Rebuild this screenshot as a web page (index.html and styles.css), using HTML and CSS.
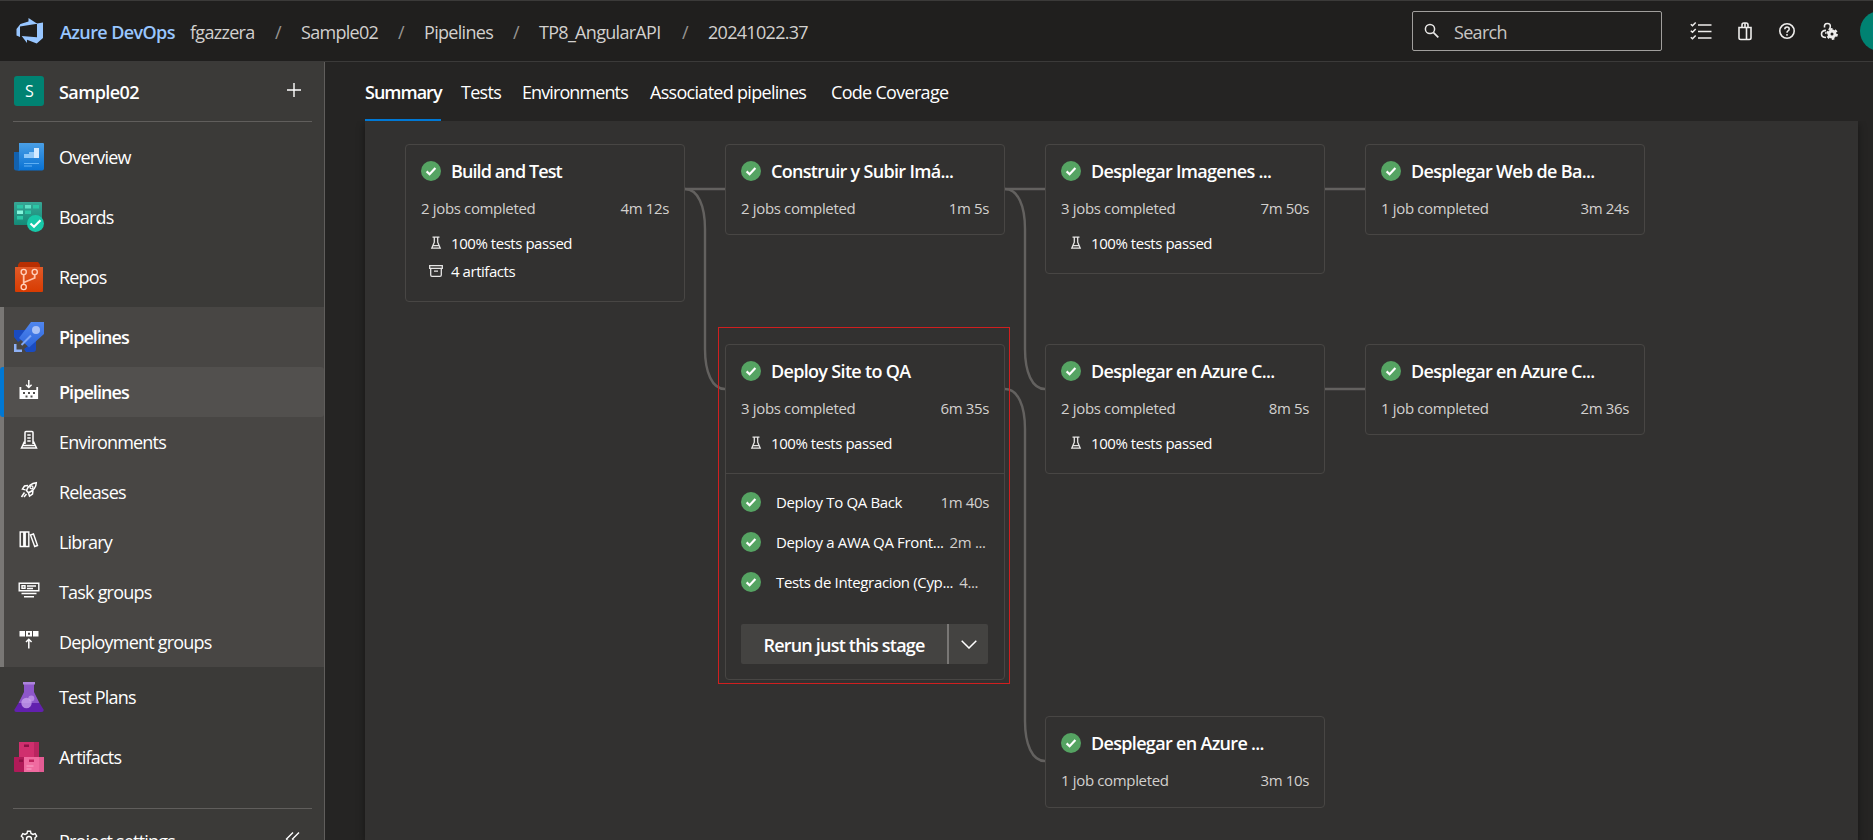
FILE: index.html
```
<!DOCTYPE html>
<html lang="en">
<head>
<meta charset="utf-8">
<title>Pipelines - Run 20241022.37</title>
<link rel="stylesheet" href="styles.css">
</head>
<body>
<svg class="defs" width="0" height="0" aria-hidden="true">
  <symbol id="ok" viewBox="0 0 20 20"><circle cx="10" cy="10" r="10" fill="#55a362"/><path d="M5.6 10.4l3 2.9 5.8-6.2" fill="none" stroke="#fff" stroke-width="2.2"/></symbol>
  <symbol id="flask" viewBox="0 0 12 14"><path d="M2.5 1.200h7M4.300 1.200v5L1.800 12.200h8.400L7.700 6.200v-5M3 9.700h6" fill="none" stroke="#e6e5e4" stroke-width="1.300"/></symbol>
  <symbol id="box" viewBox="0 0 14 14"><path d="M.7 1.700h12.600v2.600H.7zM1.700 4.300v6.700q0 1.300 1.300 1.300h8q1.300 0 1.300-1.300V4.300M5 7.200h4" fill="none" stroke="#e6e5e4" stroke-width="1.300"/></symbol>
</svg>
<header class="topbar">
  <svg class="logo" width="28" height="26" viewBox="0 0 28 26"><path fill="#98c6ff" d="M27 4.500V20l-6.300 5.500-9.700-3.700V25l-5.300-7L21 19.200V5.500zM21.200 5.700L12.500 0v3.500L4.400 6 .5 11v6.500l3.500 1.600V8.500z"/></svg>
  <span class="brand">Azure DevOps</span>
  <nav class="crumbs"><span class="c1">fgazzera</span><i>/</i><span class="c2">Sample02</span><i>/</i><span class="c3">Pipelines</span><i>/</i><span class="c4">TP8_AngularAPI</span><i>/</i><span class="c5">20241022.37</span></nav>
  <div class="search"><svg width="16" height="16" viewBox="0 0 16 16"><circle cx="6" cy="6" r="4.600" fill="none" stroke="#e8e7e6" stroke-width="1.500"/><path d="M9.300 9.300l5 5" stroke="#e8e7e6" stroke-width="1.700"/></svg><span>Search</span></div>
  <div class="tools">
    <svg class="t1" width="22" height="20" viewBox="0 0 22 20"><path d="M8 4h13.500M8 10.500h13.500M8 17h13.500M.8 3.200l1.700 1.600 3.200-3.400M.8 9.700l1.700 1.600 3.200-3.400M.8 16.200l1.700 1.600 3.200-3.400" fill="none" stroke="#eeedec" stroke-width="1.500"/></svg>
    <svg class="t2" width="16" height="20" viewBox="0 0 16 20"><path d="M2 6.500h12v10.300q0 1.700-1.700 1.700H3.700Q2 18.500 2 16.800zM5 6.500V4q0-2 1.800-2h2.400Q11 2 11 4v2.500M8 2v4M9.500 6.500v12" fill="none" stroke="#eeedec" stroke-width="1.600"/></svg>
    <svg class="t3" width="18" height="18" viewBox="0 0 18 18"><circle cx="9" cy="9" r="7.200" fill="none" stroke="#eeedec" stroke-width="1.600"/><path d="M6.800 7.200q0-2.300 2.200-2.300t2.200 2q0 1.200-1.200 1.900Q9 9.400 9 10.700M9 12v1.800" fill="none" stroke="#eeedec" stroke-width="1.500"/></svg>
    <svg class="t4" width="18" height="18" viewBox="0 0 18 18"><path d="M4.500 5.500Q4 1.500 7.300 1.500t3 3.300Q10.300 6.500 8.700 8M6 8.400Q1.500 8.500 1.500 12q0 3.500 4.500 3.500M6 11h-1" fill="none" stroke="#eeedec" stroke-width="1.600"/><circle cx="12" cy="12" r="3" fill="none" stroke="#eeedec" stroke-width="3"/><circle cx="12" cy="12" r="4.900" fill="none" stroke="#eeedec" stroke-width="2" stroke-dasharray="2.560 2.560"/></svg>
    <span class="avatar">F</span>
  </div>
</header>
<div class="body">
  <aside class="side">
    <div class="project"><span class="tile">S</span><b>Sample02</b><svg width="14" height="14" viewBox="0 0 14 14"><path d="M7 0v14M0 7h14" stroke="#fff" stroke-width="1.400"/></svg></div>
    <hr>
    <div class="row first"><span class="ic"><svg width="30" height="30" viewBox="0 0 30 30"><defs><linearGradient id="g1" x2="0" y2="1"><stop stop-color="#4a9fe6"/><stop offset="1" stop-color="#0871d3"/></linearGradient></defs><path d="M0 10h6v18.500H2q-2 0-2-2z" fill="#1261ae"/><path d="M5 1h24q1 0 1 1v24.500q0 2-2 2H3q2 0 2-2z" fill="url(#g1)"/><path d="M10 12h5v-2h5V6h5v10H10z" fill="#8fc8f8"/><path d="M20 6h5v10h-5z" fill="#d4eaff"/><path d="M10 21.500h15M10 24h8" stroke="#5fb0f4" stroke-width="1"/></svg></span>Overview</div>
    <div class="row"><span class="ic"><svg width="30" height="30" viewBox="0 0 30 30"><defs><linearGradient id="g2" x2="0" y2="1"><stop stop-color="#37a695"/><stop offset="1" stop-color="#148a77"/></linearGradient></defs><path d="M1 0h26q1 0 1 1v22H1q-1 0-1-1V1q0-1 1-1z" fill="url(#g2)"/><path d="M3 3h6v3.500H3zM19 3h6v3.500h-6zM11 8.500h6V12h-6zM3 14h6v3.500H3z" fill="#2bc6a5"/><path d="M11 3h6v3.500h-6z" fill="#5fe0c5"/><path d="M3 8.500h6V12H3z" fill="#86f5dd"/><circle cx="21.500" cy="21.500" r="8.500" fill="#17c8a8"/><path d="M16.500 21.500l3.500 3.300 6.500-6.600" fill="none" stroke="#fff" stroke-width="2.200"/></svg></span>Boards</div>
    <div class="row"><span class="ic"><svg width="30" height="30" viewBox="0 0 30 30"><defs><linearGradient id="g3" x2="0" y2="1"><stop stop-color="#e05a28"/><stop offset="1" stop-color="#d83b01"/></linearGradient></defs><path d="M6 0h18l2 2.500v3H4v-3z" fill="#b82f02"/><path d="M1 5h28v24q0 1-1 1H2q-1 0-1-1z" fill="url(#g3)"/><g fill="none" stroke="#ffd3c0" stroke-width="1.300"><circle cx="9.700" cy="10" r="2.600"/><circle cx="20.700" cy="10" r="2.600"/><circle cx="9.700" cy="25" r="2.600"/></g><path d="M9.700 12.600V22M20.700 12.600v3.400L9.700 20.500" fill="none" stroke="#ffc2a8" stroke-width="1.800"/></svg></span>Repos</div>
    <div class="group">
      <div class="row strong"><span class="ic"><svg width="30" height="30" viewBox="0 0 30 30"><defs><linearGradient id="g4" x2="0" y2="1"><stop stop-color="#5086ee"/><stop offset="1" stop-color="#2d66dc"/></linearGradient></defs><path d="M0 8h12L7 18l-3 2-4-5zM22 18v9q0 3-3 3h-7l-2-3z" fill="#1a4bc0"/><path d="M17 0h13v12L15 25.500 5 16z" fill="url(#g4)"/><circle cx="22" cy="8" r="4" fill="#a9c1f6"/><path d="M17 13.500L7.500 23" stroke="#7ea5f5" stroke-width="2"/><path d="M0 22h2.500v5.500H8V30H0z" fill="#8fb1f5"/></svg></span>Pipelines</div>
      <div class="row sub strong active"><span class="ic"><svg width="20" height="20" viewBox="0 0 20 20"><path fill="#fff" fill-rule="evenodd" d="M.5 7h1.800v3h15V7h1.800v12H.5zM4 12v2h2v-2zm5 0v2h2v-2zm5 0v2h2v-2zM6.500 15.500v2h2v-2zm5 0v2h2v-2z"/><path d="M9.800 0v7M7 4.800L9.800 7.500l2.800-2.700" fill="none" stroke="#fff" stroke-width="1.500"/></svg></span>Pipelines</div>
      <div class="row sub"><span class="ic"><svg width="18" height="20" viewBox="0 0 18 20"><path d="M5 14V2.500Q5 1.500 6 1.500h6q1 0 1 1V14M7.300 5h3.400M7.300 8h3.400M7.300 11h3.400M4.500 11.500L1.500 18h15l-3-6.500M3 15.500h12" fill="none" stroke="#fff" stroke-width="1.500"/></svg></span>Environments</div>
      <div class="row sub"><span class="ic"><svg width="18" height="18" viewBox="0 0 18 18"><path d="M6.500 9.500Q9 2.500 16.300 1.700 16 8.500 8.500 11.800zM8 4.500L4.500 5 2.500 8l3 .8M13 9.500l-.5 3.500-3 2-1-3M4.500 11.500L1.500 16M6.500 13L4 16" fill="none" stroke="#fff" stroke-width="1.500"/><circle cx="11.500" cy="6.300" r="1.500" fill="none" stroke="#fff" stroke-width="1.300"/></svg></span>Releases</div>
      <div class="row sub"><span class="ic"><svg width="20" height="17" viewBox="0 0 20 17"><path d="M1.200 1h3.600v14.500H1.200zM6.200 1h3.600v14.500H6.200zM11.500 4l3-1 4 11.500-2.800 1z" fill="none" stroke="#fff" stroke-width="1.400"/></svg></span>Library</div>
      <div class="row sub"><span class="ic"><svg width="22" height="16" viewBox="0 0 22 16"><path d="M1.200 1.200h19.600v7.600H1.200zM4 3.700h3v2.600H4zM9 4h9M9 6.500h6M3.500 11.500h15M6 14.700h10" fill="none" stroke="#fff" stroke-width="1.400"/></svg></span>Task groups</div>
      <div class="row sub"><span class="ic"><svg width="20" height="18" viewBox="0 0 20 18"><path fill="#fff" fill-rule="evenodd" d="M.5 0H6v5.500H.5zM7 0h6v5.500H7zm2 1.800v2h2v-2zM14 0h5.500v5.500H14z"/><path d="M9.800 17.500V8.500M7 11l2.800-2.800 2.800 2.800" fill="none" stroke="#fff" stroke-width="1.500"/></svg></span>Deployment groups</div>
    </div>
    <div class="row"><span class="ic"><svg width="30" height="30" viewBox="0 0 30 30"><path d="M10 2h10v8l5.500 11h-21L10 10z" fill="#8d56ca"/><path d="M9 0h12v2.500H9z" fill="#ad84dd"/><path d="M4.500 21h21l4 6.500q.5 2.500-2 2.500h-25q-2.500 0-2-2.500z" fill="#6220ae"/><circle cx="12.500" cy="21" r="5.200" fill="#c8a0ec" opacity=".8"/><circle cx="17.300" cy="16.500" r="3" fill="#c8a0ec" opacity=".7"/></svg></span>Test Plans</div>
    <div class="row"><span class="ic"><svg width="30" height="30" viewBox="0 0 30 30"><path d="M5 0h20v15H5z" fill="#d02f6e"/><path d="M20 0h5v15h-5z" fill="#b92560"/><path d="M0 15h10v15H1q-1 0-1-1z" fill="#b01a58"/><path d="M10 15h20v14q0 1-1 1H10z" fill="#f06ba0"/><path d="M25 15h5v15h-5z" fill="#e45c94"/><path d="M10 2.500h5V5h-5zM5 17.500h4V20H5z" fill="#8d1145"/><path d="M15 17.500h5V20h-5z" fill="#c1245f"/><path d="M12.500 24h7M12.500 27h5" stroke="#f9a5c7"/></svg></span>Artifacts</div>
    <hr class="low">
    <div class="row foot"><span class="ic"><svg width="18" height="18" viewBox="0 0 18 18"><circle cx="9" cy="9" r="2.500" fill="none" stroke="#fff" stroke-width="1.400"/><path d="M7.500 1.200h3l.5 2.300 2 1 2.200-.9 1.500 2.600L15 7.800v2.400l1.700 1.600-1.500 2.600-2.200-.9-2 1-.5 2.300h-3L7 14.500l-2-1-2.200.9-1.500-2.600L3 10.200V7.800L1.300 6.200l1.500-2.600 2.200.9 2-1z" fill="none" stroke="#fff" stroke-width="1.400"/></svg></span>Project settings<svg class="fold" width="16" height="14" viewBox="0 0 16 14"><path d="M8 .5L1.500 7 8 13.500M14 .5L7.500 7l6.500 6.500" fill="none" stroke="#fff" stroke-width="1.400"/></svg></div>
  </aside>
  <main>
    <nav class="tabs"><b class="tb1">Summary</b><span class="tb2">Tests</span><span class="tb3">Environments</span><span class="tb4">Associated pipelines</span><span class="tb5">Code Coverage</span></nav>
    <section class="canvas">
      <svg class="links" width="1493" height="719" viewBox="365 121 1493 719"><g fill="none" stroke="#63615f" stroke-width="2.400">
        <path d="M685 189h40M1005 189h40M1325 189h40M1325 389h40"/>
        <path d="M685 189C698 189 705 206 705 229V349C705 372 712 389 725 389"/>
        <path d="M1005 189C1018 189 1025 206 1025 229V349C1025 372 1032 389 1045 389"/>
        <path d="M1005 389C1018 389 1025 406 1025 429V721C1025 744 1032 761 1045 761"/></g></svg>
      <article class="card k1"><h3><svg><use href="#ok"/></svg>Build and Test</h3><p>2 jobs completed<em>4m 12s</em></p><div class="fact"><svg><use href="#flask"/></svg>100% tests passed</div><div class="fact art"><svg><use href="#box"/></svg>4 artifacts</div></article>
      <article class="card k2"><h3><svg><use href="#ok"/></svg>Construir y Subir Imá...</h3><p>2 jobs completed<em>1m 5s</em></p></article>
      <article class="card k3"><h3><svg><use href="#ok"/></svg>Desplegar Imagenes ...</h3><p>3 jobs completed<em>7m 50s</em></p><div class="fact"><svg><use href="#flask"/></svg>100% tests passed</div></article>
      <article class="card k4"><h3><svg><use href="#ok"/></svg>Desplegar Web de Ba...</h3><p>1 job completed<em>3m 24s</em></p></article>
      <article class="card k5"><h3><svg><use href="#ok"/></svg>Deploy Site to QA</h3><p>3 jobs completed<em>6m 35s</em></p><div class="fact"><svg><use href="#flask"/></svg>100% tests passed</div>
        <div class="jobs">
          <div><svg><use href="#ok"/></svg><span>Deploy To QA Back</span><em class="end">1m 40s</em></div>
          <div><svg><use href="#ok"/></svg><span>Deploy a AWA QA Front...</span><em>2m ...</em></div>
          <div><svg><use href="#ok"/></svg><span>Tests de Integracion (Cyp...</span><em>4...</em></div>
        </div>
        <div class="rerun"><b>Rerun just this stage</b><span><svg width="16" height="9" viewBox="0 0 16 9"><path d="M.7.700L8 8 15.300.7" fill="none" stroke="#fff" stroke-width="1.500"/></svg></span></div>
      </article>
      <article class="card k6"><h3><svg><use href="#ok"/></svg>Desplegar en Azure C...</h3><p>2 jobs completed<em>8m 5s</em></p><div class="fact"><svg><use href="#flask"/></svg>100% tests passed</div></article>
      <article class="card k7"><h3><svg><use href="#ok"/></svg>Desplegar en Azure C...</h3><p>1 job completed<em>2m 36s</em></p></article>
      <article class="card k8"><h3><svg><use href="#ok"/></svg>Desplegar en Azure ...</h3><p>1 job completed<em>3m 10s</em></p></article>
      <div class="mark"></div>
    </section>
  </main>
</div>
</body>
</html>
```
FILE: styles.css
```
* { box-sizing: border-box; }
body { margin: 0; width: 1873px; height: 840px; overflow: hidden; background: #252423; color: #fff; font: 18px/24px "Open Sans", "Noto Sans", sans-serif; letter-spacing: -0.7px; white-space: nowrap; }
svg { display: block; flex: none; }
.defs { position: absolute; }
b, .strong { font-weight: 600; }
em, i { font-style: normal; }

.topbar { height: 62px; border-top: 1px solid #3b3a39; border-bottom: 1px solid #3b3a39; background: #201f1e; display: flex; align-items: center; overflow: hidden; }
.topbar > *, .crumbs > *, .tabs > * { flex: none; }
.logo { margin-left: 16px; }
.brand { width: 130px; margin-left: 16px; color: #98c6ff; font-weight: 600; padding-top: 2px; letter-spacing: -0.6px; }
.crumbs { display: flex; width: 1222px; color: #d2d0ce; padding-top: 2px; }
.crumbs i { width: 46px; text-align: center; color: #979593; }
.c1 { width: 65px; } .c2 { width: 77px; } .c3 { width: 69px; } .c4 { width: 123px; }
.search { width: 250px; height: 40px; border: 1px solid #a19f9d; border-radius: 2px; display: flex; align-items: center; padding-left: 11px; color: #c8c6c4; }
.search span { padding: 2px 0 0 14px; }
.tools { display: flex; align-items: center; }
.t1 { margin-left: 28px; } .t2 { margin-left: 25px; } .t3 { margin-left: 25px; } .t4 { margin-left: 24px; }
.avatar { flex: none; width: 40px; height: 40px; margin-left: 22px; border-radius: 50%; background: #008272; padding-left: 12px; font-size: 16px; line-height: 40px; }

.body { display: flex; height: 778px; }
.side { width: 325px; background: #3b3a38; border-right: 1px solid #605e5c; overflow: hidden; flex: none; letter-spacing: -0.8px; }
.project { height: 59px; display: flex; align-items: center; padding: 0 23px 2px 14px; }
.project b { flex: 1; padding-top: 3px; letter-spacing: -0.6px; }
.project svg { margin-bottom: 1px; }
.tile { width: 30px; height: 30px; margin: 0 15px 0 0; border-radius: 3px; background: #008272; text-align: center; font-size: 16px; line-height: 30px; }
.side hr { height: 1px; border: 0; margin: 0 12px 0 13px; background: #605e5c; }
.row { height: 60px; display: flex; align-items: center; line-height: 20px; }
.row.first { margin-top: 5px; }
.strong { letter-spacing: -0.95px; }
.ic { width: 59px; padding-left: 14px; flex: none; }
.group { background: #484644; border-left: 4px solid #797775; }
.group .row { margin-left: -4px; }
.sub { height: 50px; }
.sub .ic, .foot .ic { padding: 0 1px 5px 0; display: flex; justify-content: center; }
.active { background: #52504e; border-left: 4px solid #0078d4; border-radius: 3px; }
.active .ic { margin-left: -4px; }
.side hr.low { margin-top: 21px; }
.foot { margin-top: 7px; height: 50px; padding-right: 23px; }
.fold { margin: 0 0 5px auto; }

main { width: 1548px; padding-left: 40px; }
.tabs { display: flex; height: 59px; padding-top: 18px; }
.tb1 { width: 76px; border-bottom: 2px solid #0078d4; letter-spacing: -1px; }
.tb2 { margin-left: 20px; width: 61px; } .tb3 { width: 128px; letter-spacing: -0.9px; } .tb4 { width: 181px; }
.canvas { position: relative; width: 1493px; height: 719px; background: #323130; box-shadow: 0 3px 8px #0006; clip-path: inset(0 -15px 0 -15px); }
.links { position: absolute; left: 0; top: 0; }
.card { position: absolute; width: 280px; height: 91px; border: 1px solid #484644; border-radius: 4px; padding: 14px 15px 0; background: #323130; font-size: 15px; letter-spacing: -0.35px; }
.k1 { left: 40px; top: 23px; height: 158px; } .k2 { left: 360px; top: 23px; } .k3 { left: 680px; top: 23px; height: 130px; } .k4 { left: 1000px; top: 23px; }
.k5 { left: 360px; top: 223px; height: 336px; } .k6 { left: 680px; top: 223px; height: 130px; } .k7 { left: 1000px; top: 223px; } .k8 { left: 680px; top: 595px; height: 92px; }
.card h3 { margin: 0; display: flex; align-items: center; font-size: 18px; line-height: 24px; font-weight: 600; letter-spacing: -0.68px; }
.k1 h3 { letter-spacing: -0.9px; }
.card h3 svg, .jobs svg { width: 20px; height: 20px; margin-right: 10px; }
.card p { margin: 14px 0 0; display: flex; justify-content: space-between; line-height: 22px; color: #d2d0ce; }
.fact { display: flex; align-items: center; line-height: 22px; margin-top: 13px; letter-spacing: -0.45px; }
.fact svg { width: 14px; height: 14px; margin: 0 8px; }
.fact.art { margin-top: 6px; }
.jobs { margin: 19px -15px 0; padding: 13px 15px 0; border-top: 1px solid #484644; }
.jobs div { display: flex; align-items: center; height: 30px; margin-bottom: 10px; }
.jobs svg { margin-right: 15px; }
.jobs em { margin-left: 6px; color: #d2d0ce; }
.jobs .end { margin-left: auto; }
.rerun { display: flex; width: 247px; height: 40px; margin-top: 27px; background: #444341; border-radius: 2px; font-size: 18px; line-height: 42px; letter-spacing: -0.8px; }
.rerun b { width: 208px; text-align: center; border-right: 2px solid #797775; }
.rerun span { flex: 1; display: grid; place-items: center; }
.mark { position: absolute; left: 353px; top: 206px; width: 292px; height: 357px; border: 1px solid #d01f1f; }
```
